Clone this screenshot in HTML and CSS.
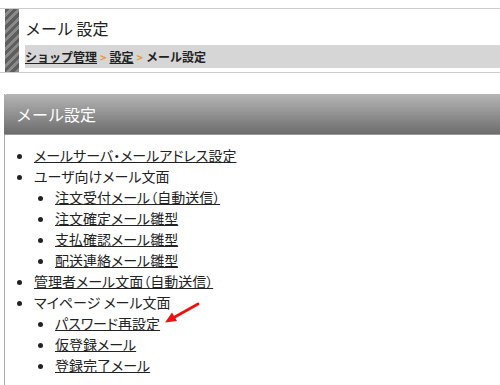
FILE: index.html
```html
<!DOCTYPE html>
<html lang="ja">
<head>
    <meta charset="UTF-8">
    <title>メール設定</title>
    <link rel="stylesheet" href="styles.css">
</head>
<body>
    <div class="page-head">
        <div class="stripe"></div>
        <div class="head-body">
            <h1>メール 設定</h1>
            <div class="crumbs">
                <a href="#">ショップ管理</a><span class="sep">&gt;</span><a href="#">設定</a><span class="sep">&gt;</span>メール設定
            </div>
        </div>
    </div>

    <div class="panel">
        <h2>メール設定</h2>
        <div class="panel-body">
            <ul class="menu">
                <li><a href="#">メールサーバ・メールアドレス設定</a></li>
                <li>ユーザ向けメール文面
                    <ul>
                        <li><a href="#">注文受付メール（自動送信）</a></li>
                        <li><a href="#">注文確定メール雛型</a></li>
                        <li><a href="#">支払確認メール雛型</a></li>
                        <li><a href="#">配送連絡メール雛型</a></li>
                    </ul>
                </li>
                <li><a href="#">管理者メール文面（自動送信）</a></li>
                <li>マイページ メール文面
                    <ul>
                        <li><a href="#">パスワード再設定</a></li>
                        <li><a href="#">仮登録メール</a></li>
                        <li><a href="#">登録完了メール</a></li>
                    </ul>
                </li>
            </ul>
            <!-- 注目の矢印 -->
            <svg class="pointer" width="44" height="30" viewBox="0 0 44 30">
                <line x1="37" y1="4" x2="12" y2="18" stroke="#ee1111" stroke-width="2.8" stroke-linecap="round"/>
                <polygon points="4,22.5 11,12.6 16,21" fill="#ee1111"/>
            </svg>
        </div>
    </div>
</body>
</html>
```

FILE: styles.css
```css
body {
    margin: 0;
    padding: 0;
    background-color: #ffffff;
    color: #222222;
    font-family: "Noto Sans CJK JP", "DejaVu Sans", sans-serif;
    overflow: hidden;
}
a {
    color: #222222;
    text-decoration: underline;
}
.page-head {
    display: flex;
    margin-top: 8px;
    border-top: 1px solid #cccccc;
    border-bottom: 1px solid #cccccc;
    padding-bottom: 4px;
}
.stripe {
    width: 14px;
    margin-left: 5px;
    margin-bottom: -4px;
    background: repeating-linear-gradient(135deg, #5e5e5e 0 3px, #8a8a8a 3px 6px);
}
.head-body {
    flex: 1;
    margin-left: 6px;
}
h1 {
    margin: 0;
    height: 36px;
    font-size: 16px;
    font-weight: normal;
    line-height: 38px;
    color: #222222;
}
.crumbs {
    height: 23px;
    line-height: 23px;
    background-color: #d6d6d6;
    font-size: 12px;
    font-weight: bold;
    color: #222222;
}
.crumbs .sep {
    color: #e29a3a;
    margin: 0 3px;
    font-size: 11px;
}
.panel {
    position: relative;
    margin: 21px 0 0 4px;
    border-left: 1px solid #aaaaaa;
}
.panel h2 {
    margin: 0 0 0 -1px;
    height: 40px;
    line-height: 40px;
    padding-left: 12px;
    font-size: 16px;
    font-weight: normal;
    color: #ffffff;
    background: linear-gradient(#b5b5b5, #6d6d6d);
    border-bottom: 1px solid #999999;
    border-top-left-radius: 4px;
}
.panel-body {
    position: relative;
    padding: 10px 0 20px;
}
.menu, .menu ul {
    margin: 0;
    list-style: disc;
}
.menu {
    padding-left: 29px;
    font-feature-settings: "palt";
}
.menu ul {
    padding-left: 21px;
}
.menu li {
    font-size: 14px;
    line-height: 21px;
}
.pointer {
    position: absolute;
    left: 156px;
    top: 165px;
}
```
